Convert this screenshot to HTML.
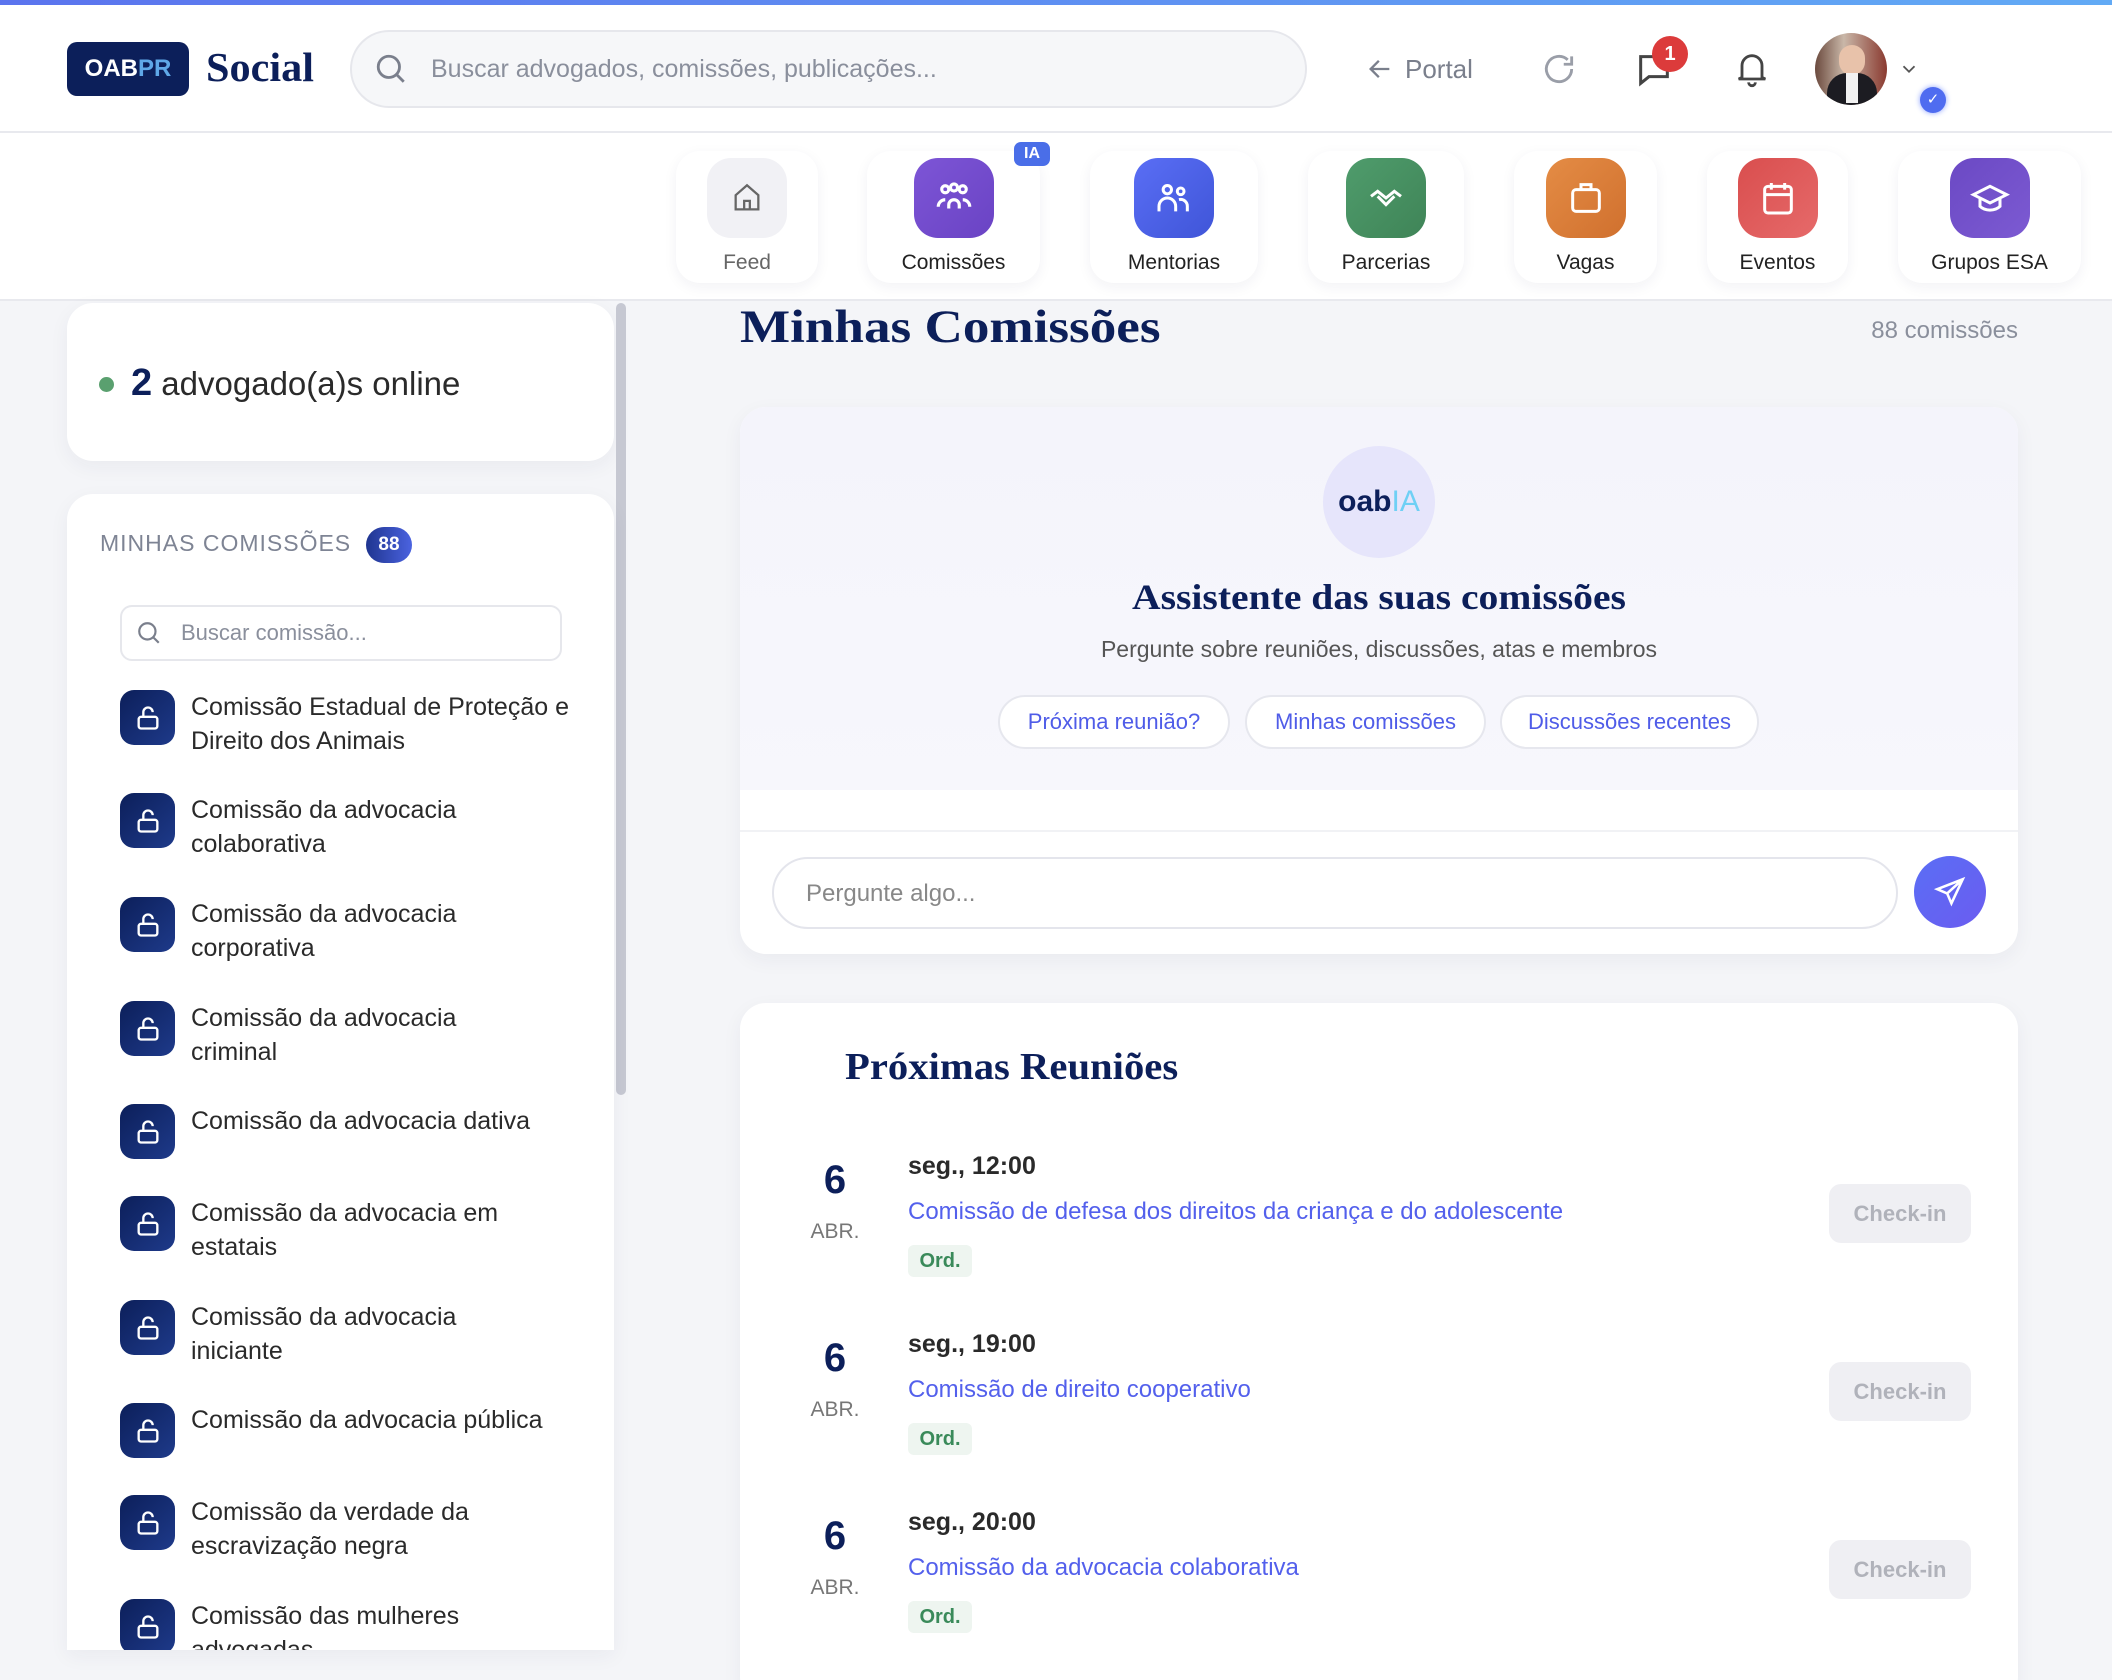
<!DOCTYPE html>
<html style="width:2112px;height:1680px;overflow:hidden"><head><meta charset="utf-8">
<style>
*{box-sizing:border-box;margin:0;padding:0}
body{width:2112px;height:1680px;overflow:hidden;background:#f4f5f8;font-family:"Liberation Sans",sans-serif;position:relative;color:#1f2430}
.abs{position:absolute}
.topbar{left:0;top:0;width:2112px;height:5px;background:linear-gradient(90deg,#5b74ee,#62aaf5)}
.header{left:0;top:5px;width:2112px;height:128px;background:#fff;border-bottom:2px solid #e8e9ee}
.nav{left:0;top:133px;width:2112px;height:168px;background:#fff;border-bottom:2px solid #e8e9ee}
.serif{font-family:"Liberation Serif",serif;font-weight:bold;color:#0c1f5a}
.tile{position:absolute;top:151px;height:132px;background:#fff;border-radius:24px;box-shadow:0 4px 14px rgba(30,40,80,.06)}
.tile .ic{position:absolute;top:7px;left:50%;margin-left:-40px;width:80px;height:80px;border-radius:24px;display:flex;align-items:center;justify-content:center}
.tile .lb{position:absolute;top:100px;left:0;right:0;text-align:center;font-size:21px;color:#222}
.card{background:#fff;border-radius:26px;box-shadow:0 6px 20px rgba(30,40,80,.05)}
.item{position:absolute;left:120px;width:470px}
.item .lk{position:absolute;left:0;top:0;width:55px;height:55px;border-radius:14px;background:linear-gradient(135deg,#0c1f5a,#1e3a8a);display:flex;align-items:center;justify-content:center}
.item .t{position:absolute;left:71px;top:0;font-size:25px;line-height:34px;color:#2a2a2a;width:400px}
.chip{position:absolute;top:695px;height:54px;border:2px solid #e6e7ee;border-radius:27px;background:#fff;color:#4f5ce8;font-size:22px;line-height:50px;text-align:center}
.row{position:absolute;left:740px;width:1278px}
.day{position:absolute;left:70px;width:50px;text-align:center;font-size:40px;font-weight:bold;color:#0c1f5a}
.mon{position:absolute;left:60px;width:70px;text-align:center;font-size:21px;color:#777}
.tm{position:absolute;left:168px;font-size:25px;font-weight:bold;color:#2a2a2a}
.link{position:absolute;left:168px;font-size:24px;color:#5360ec}
.ord{position:absolute;left:168px;width:64px;height:32px;border-radius:6px;background:#eef5f0;color:#3a8a5a;font-size:20px;font-weight:bold;line-height:32px;text-align:center}
.ck{position:absolute;left:1089px;width:142px;height:59px;border-radius:12px;background:#efeff3;color:#b0b2ba;font-size:22px;font-weight:bold;line-height:59px;text-align:center}
</style></head><body>
<div class="abs topbar"></div>
<div class="abs header"></div>
<div class="abs" style="left:67px;top:42px;width:122px;height:54px;border-radius:10px;background:#0c1f5a;color:#fff;font-weight:bold;font-size:24px;line-height:54px;text-align:center">OAB<span style="color:#5fa8e8">PR</span></div>
<div class="abs serif" style="left:206px;top:43px;font-size:41px;transform:scaleX(1.03);transform-origin:left">Social</div>
<div class="abs" style="left:350px;top:30px;width:957px;height:78px;border-radius:39px;background:#f6f7f9;border:2px solid #e6e7ec"></div>
<svg class="abs" style="left:374px;top:52px" width="34" height="34" viewBox="0 0 24 24" fill="none" stroke="#7a7f8c" stroke-width="2"><circle cx="10.5" cy="10.5" r="7.5"/><path d="M16 16l5 5"/></svg>
<div class="abs" style="left:431px;top:55px;font-size:25px;color:#8a8f9c">Buscar advogados, comissões, publicações...</div>
<svg class="abs" style="left:1366px;top:55px" width="28" height="28" viewBox="0 0 24 24" fill="none" stroke="#7a7f8c" stroke-width="2"><path d="M20 12H4M11 5l-7 7 7 7"/></svg>
<div class="abs" style="left:1405px;top:54px;font-size:26px;color:#7a7f8c">Portal</div>
<svg class="abs" style="left:1540px;top:50px" width="38" height="38" viewBox="0 0 24 24" fill="none" stroke="#9a9ea8" stroke-width="1.8"><path d="M20 12a8 8 0 1 1-2.5-5.8M20 4v5h-5"/></svg>
<svg class="abs" style="left:1634px;top:50px" width="40" height="40" viewBox="0 0 24 24" fill="none" stroke="#444" stroke-width="1.8"><path d="M4 4h16v12H9l-5 4z"/></svg>
<div class="abs" style="left:1652px;top:36px;width:36px;height:36px;border-radius:18px;background:#dc3b3b;color:#fff;font-weight:bold;font-size:20px;line-height:36px;text-align:center">1</div>
<svg class="abs" style="left:1732px;top:48px" width="40" height="42" viewBox="0 0 24 24" fill="none" stroke="#444" stroke-width="1.7"><path d="M6 17V10a6 6 0 0 1 12 0v7l2 1H4zM10 20a2 2 0 0 0 4 0"/></svg>
<div class="abs" style="left:1815px;top:33px;width:72px;height:72px;border-radius:36px;overflow:hidden;background:linear-gradient(90deg,#6b4a3e,#c9b7a8 40%,#8a3a30)">
<div class="abs" style="left:24px;top:12px;width:26px;height:30px;border-radius:13px;background:#e8c2aa"></div>
<div class="abs" style="left:12px;top:40px;width:50px;height:40px;border-radius:20px 20px 0 0;background:#1c1c22"></div>
<div class="abs" style="left:31px;top:40px;width:12px;height:30px;background:#f2f2f2"></div></div>
<svg class="abs" style="left:1898px;top:58px" width="22" height="22" viewBox="0 0 24 24" fill="none" stroke="#555" stroke-width="2"><path d="M6 9l6 6 6-6"/></svg>
<div class="abs" style="left:1920px;top:87px;width:26px;height:26px;border-radius:13px;background:#4f6cf0;color:#fff;font-size:15px;text-align:center;line-height:26px;box-shadow:0 0 6px #8aa0ff">✓</div>

<div class="abs nav"></div>
<div class="tile" style="left:676px;width:142px"><div class="ic" style="background:#f1f1f5"><svg width="34" height="34" viewBox="0 0 24 24" fill="none" stroke="#666" stroke-width="1.6"><path d="M4 10l8-7 8 7v10H4zM10 20v-6h4v6"/></svg></div><div class="lb" style="color:#666">Feed</div></div>
<div class="tile" style="left:867px;width:173px"><div class="ic" style="background:linear-gradient(135deg,#7d55d6,#6a43c4)"><svg width="42" height="42" viewBox="0 0 24 24" fill="none" stroke="#fff" stroke-width="1.8"><circle cx="7" cy="7" r="2"/><circle cx="12" cy="6" r="2"/><circle cx="17" cy="7" r="2"/><path d="M3 17a4 4 0 0 1 4-4M9 18v-2a3 3 0 0 1 6 0v2M21 17a4 4 0 0 0-4-4"/></svg></div><div class="lb">Comissões</div></div>
<div class="abs" style="left:1014px;top:142px;width:36px;height:24px;border-radius:7px;background:#4a6ee8;color:#fff;font-size:16px;font-weight:bold;text-align:center;line-height:24px">IA</div>
<div class="tile" style="left:1090px;width:168px"><div class="ic" style="background:linear-gradient(135deg,#5a6ef5,#3f55d8)"><svg width="40" height="40" viewBox="0 0 24 24" fill="none" stroke="#fff" stroke-width="1.8"><circle cx="8" cy="7" r="2.5"/><circle cx="16" cy="8" r="2"/><path d="M3 20v-3a5 5 0 0 1 10 0v3M15 13a4 4 0 0 1 5 4v3"/></svg></div><div class="lb">Mentorias</div></div>
<div class="tile" style="left:1308px;width:156px"><div class="ic" style="background:linear-gradient(135deg,#4f9c6c,#3f8457)"><svg width="40" height="40" viewBox="0 0 24 24" fill="none" stroke="#fff" stroke-width="1.8"><path d="M3 11l4-3 5 4 5-4 4 3M7 11l5 5 5-5"/></svg></div><div class="lb">Parcerias</div></div>
<div class="tile" style="left:1514px;width:143px"><div class="ic" style="background:linear-gradient(135deg,#e48c45,#d0702e)"><svg width="40" height="40" viewBox="0 0 24 24" fill="none" stroke="#fff" stroke-width="1.8"><rect x="4" y="7" width="16" height="13" rx="2"/><path d="M9 7V4h6v3"/></svg></div><div class="lb">Vagas</div></div>
<div class="tile" style="left:1707px;width:141px"><div class="ic" style="background:linear-gradient(135deg,#d94e4e,#e66a6a)"><svg width="40" height="40" viewBox="0 0 24 24" fill="none" stroke="#fff" stroke-width="1.8"><rect x="4" y="5" width="16" height="16" rx="2"/><path d="M4 10h16M8 3v4M16 3v4"/></svg></div><div class="lb">Eventos</div></div>
<div class="tile" style="left:1898px;width:183px"><div class="ic" style="background:linear-gradient(135deg,#6b49c4,#7c5ad2)"><svg width="40" height="40" viewBox="0 0 24 24" fill="none" stroke="#fff" stroke-width="1.8"><path d="M2 10l10-5 10 5-10 5zM6 12v5c3 3 9 3 12 0v-5"/></svg></div><div class="lb">Grupos ESA</div></div>

<div class="abs card" style="left:67px;top:303px;width:547px;height:158px"></div>
<div class="abs" style="left:99px;top:377px;width:15px;height:15px;border-radius:8px;background:#5aa06f"></div>
<div class="abs" style="left:131px;top:362px;font-size:33px;color:#2a2a2a"><b style="color:#0c1f5a;font-size:38px">2</b> advogado(a)s online</div>
<div class="abs" style="left:616px;top:303px;width:10px;height:792px;border-radius:5px;background:#c6c8d2"></div>

<div class="abs card" style="left:67px;top:494px;width:547px;height:1156px;border-radius:26px 26px 0 0"></div>
<div class="abs" style="left:100px;top:530px;font-size:23px;color:#7e8494;letter-spacing:1px">MINHAS COMISSÕES</div>
<div class="abs" style="left:366px;top:527px;width:46px;height:36px;border-radius:18px;background:linear-gradient(90deg,#1f3590,#4b63e0);color:#fff;font-weight:bold;font-size:19px;line-height:36px;text-align:center">88</div>
<div class="abs" style="left:120px;top:605px;width:442px;height:56px;border:2px solid #e6e7ec;border-radius:12px"></div>
<svg class="abs" style="left:136px;top:620px" width="26" height="26" viewBox="0 0 24 24" fill="none" stroke="#7a7f8c" stroke-width="2"><circle cx="10.5" cy="10.5" r="7.5"/><path d="M16 16l5 5"/></svg>
<div class="abs" style="left:181px;top:620px;font-size:22px;color:#8a8f9c">Buscar comissão...</div>

<div class="abs" style="left:0;top:0;width:614px;height:1650px;overflow:hidden">
<div class="item" style="top:690px"><div class="lk"><svg width="28" height="28" viewBox="0 0 24 24" fill="none" stroke="#fff" stroke-width="2"><rect x="4" y="11" width="16" height="10" rx="2"/><path d="M8 11V7a4 4 0 0 1 8 0"/></svg></div><div class="t">Comissão Estadual de Proteção e Direito dos Animais</div></div>
<div class="item" style="top:793px"><div class="lk"><svg width="28" height="28" viewBox="0 0 24 24" fill="none" stroke="#fff" stroke-width="2"><rect x="4" y="11" width="16" height="10" rx="2"/><path d="M8 11V7a4 4 0 0 1 8 0"/></svg></div><div class="t">Comissão da advocacia<br>colaborativa</div></div>
<div class="item" style="top:897px"><div class="lk"><svg width="28" height="28" viewBox="0 0 24 24" fill="none" stroke="#fff" stroke-width="2"><rect x="4" y="11" width="16" height="10" rx="2"/><path d="M8 11V7a4 4 0 0 1 8 0"/></svg></div><div class="t">Comissão da advocacia<br>corporativa</div></div>
<div class="item" style="top:1001px"><div class="lk"><svg width="28" height="28" viewBox="0 0 24 24" fill="none" stroke="#fff" stroke-width="2"><rect x="4" y="11" width="16" height="10" rx="2"/><path d="M8 11V7a4 4 0 0 1 8 0"/></svg></div><div class="t">Comissão da advocacia<br>criminal</div></div>
<div class="item" style="top:1104px"><div class="lk"><svg width="28" height="28" viewBox="0 0 24 24" fill="none" stroke="#fff" stroke-width="2"><rect x="4" y="11" width="16" height="10" rx="2"/><path d="M8 11V7a4 4 0 0 1 8 0"/></svg></div><div class="t">Comissão da advocacia dativa</div></div>
<div class="item" style="top:1196px"><div class="lk"><svg width="28" height="28" viewBox="0 0 24 24" fill="none" stroke="#fff" stroke-width="2"><rect x="4" y="11" width="16" height="10" rx="2"/><path d="M8 11V7a4 4 0 0 1 8 0"/></svg></div><div class="t">Comissão da advocacia em<br>estatais</div></div>
<div class="item" style="top:1300px"><div class="lk"><svg width="28" height="28" viewBox="0 0 24 24" fill="none" stroke="#fff" stroke-width="2"><rect x="4" y="11" width="16" height="10" rx="2"/><path d="M8 11V7a4 4 0 0 1 8 0"/></svg></div><div class="t">Comissão da advocacia<br>iniciante</div></div>
<div class="item" style="top:1403px"><div class="lk"><svg width="28" height="28" viewBox="0 0 24 24" fill="none" stroke="#fff" stroke-width="2"><rect x="4" y="11" width="16" height="10" rx="2"/><path d="M8 11V7a4 4 0 0 1 8 0"/></svg></div><div class="t">Comissão da advocacia pública</div></div>
<div class="item" style="top:1495px"><div class="lk"><svg width="28" height="28" viewBox="0 0 24 24" fill="none" stroke="#fff" stroke-width="2"><rect x="4" y="11" width="16" height="10" rx="2"/><path d="M8 11V7a4 4 0 0 1 8 0"/></svg></div><div class="t">Comissão da verdade da<br>escravização negra</div></div>
<div class="item" style="top:1599px"><div class="lk"><svg width="28" height="28" viewBox="0 0 24 24" fill="none" stroke="#fff" stroke-width="2"><rect x="4" y="11" width="16" height="10" rx="2"/><path d="M8 11V7a4 4 0 0 1 8 0"/></svg></div><div class="t">Comissão das mulheres<br>advogadas</div></div>
</div>

<div class="abs serif" style="left:740px;top:300px;font-size:47px;transform:scaleX(1.13);transform-origin:left">Minhas Comissões</div>
<div class="abs" style="left:1820px;top:317px;width:198px;text-align:right;font-size:24px;color:#8a8f9c">88 comissões</div>

<div class="abs card" style="left:740px;top:407px;width:1278px;height:547px;overflow:hidden">
<div class="abs" style="left:0;top:0;width:1278px;height:383px;background:linear-gradient(180deg,#f4f4fb,#f7f7fc)"></div>
<div class="abs" style="left:0;top:423px;width:1278px;height:2px;background:#f1f2f5"></div>
</div>
<div class="abs" style="left:1323px;top:446px;width:112px;height:112px;border-radius:56px;background:#e6e5fb;text-align:center;line-height:112px;font-size:30px;font-weight:bold;color:#0c1f5a">oab<span style="color:#6fd0f5;font-weight:normal">IA</span></div>
<div class="abs serif" style="left:740px;top:576px;width:1278px;text-align:center;font-size:36px;transform:scaleX(1.1)">Assistente das suas comissões</div>
<div class="abs" style="left:740px;top:636px;width:1278px;text-align:center;font-size:23px;color:#555">Pergunte sobre reuniões, discussões, atas e membros</div>
<div class="chip" style="left:998px;width:232px">Próxima reunião?</div>
<div class="chip" style="left:1245px;width:241px">Minhas comissões</div>
<div class="chip" style="left:1500px;width:259px">Discussões recentes</div>
<div class="abs" style="left:772px;top:857px;width:1126px;height:72px;border:2px solid #e4e5ec;border-radius:36px;background:#fff"></div>
<div class="abs" style="left:806px;top:880px;font-size:24px;color:#888">Pergunte algo...</div>
<div class="abs" style="left:1914px;top:856px;width:72px;height:72px;border-radius:36px;background:linear-gradient(135deg,#5a6ef5,#6b5cf0);display:flex;align-items:center;justify-content:center"><svg width="34" height="34" viewBox="0 0 24 24" fill="none" stroke="#fff" stroke-width="1.8"><path d="M21 3L3 10l7 3 3 7zM10 13l11-10"/></svg></div>

<div class="abs card" style="left:740px;top:1003px;width:1278px;height:700px"></div>
<div class="abs serif" style="left:845px;top:1045px;font-size:38px;transform:scaleX(1.07);transform-origin:left">Próximas Reuniões</div>

<div class="row" style="top:1150px">
<div class="day" style="top:8px">6</div><div class="mon" style="top:70px">ABR.</div>
<div class="tm" style="top:2px">seg., 12:00</div>
<div class="link" style="top:48px">Comissão de defesa dos direitos da criança e do adolescente</div>
<div class="ord" style="top:95px">Ord.</div>
<div class="ck" style="top:34px">Check-in</div></div>
<div class="row" style="top:1328px">
<div class="day" style="top:8px">6</div><div class="mon" style="top:70px">ABR.</div>
<div class="tm" style="top:2px">seg., 19:00</div>
<div class="link" style="top:48px">Comissão de direito cooperativo</div>
<div class="ord" style="top:95px">Ord.</div>
<div class="ck" style="top:34px">Check-in</div></div>
<div class="row" style="top:1506px">
<div class="day" style="top:8px">6</div><div class="mon" style="top:70px">ABR.</div>
<div class="tm" style="top:2px">seg., 20:00</div>
<div class="link" style="top:48px">Comissão da advocacia colaborativa</div>
<div class="ord" style="top:95px">Ord.</div>
<div class="ck" style="top:34px">Check-in</div></div>
</body></html>
